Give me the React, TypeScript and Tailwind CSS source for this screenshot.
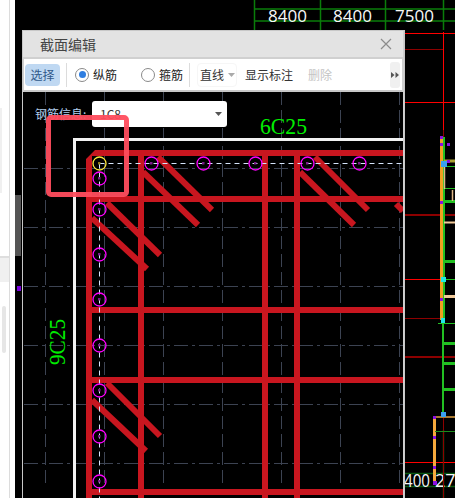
const sans = "font-['Noto_Sans_CJK_SC','Liberation_Sans',sans-serif]";

const gridX = [45, 104, 163, 222, 281, 340, 399];
const gridY = [168, 227, 286, 345, 404, 463];
const topRebars = [151, 203, 255, 307, 359];
const sideRebars = [178, 209, 254, 299, 345, 390, 436, 481];

const hBars = [
  [92, 196],
  [92, 307],
  [92, 377],
  [92, 489],
];
const vBars = [138, 262, 294];
const diagonals = [
  [158, 157, 212, 210],
  [143, 172, 198, 225],
  [107, 203, 160, 255],
  [92, 218, 147, 269],
  [315, 157, 368, 210],
  [300, 172, 354, 225],
  [107, 383, 160, 436],
  [92, 400, 146, 451],
  [396, 204, 403, 211],
];

const Rebar = ({ x, y, color = "#ff00ff" }: { x: number; y: number; color?: string }) => (
  <g>
    <circle cx={x + 0.5} cy={y + 0.5} r="6.5" fill="none" stroke={color} strokeWidth="1.3" />
    <rect x={x - 1} y={y - 1} width="2.5" height="2.5" fill={color === "#ff00ff" ? "#7a1a8a" : "#8a7a1a"} />
  </g>
);

const SectionDrawing = () => (
  <svg className="absolute inset-0 block" width="380" height="406" viewBox="23 92 380 406">
    {gridX.map((x) => (
      <line key={x} x1={x + 0.5} y1="92" x2={x + 0.5} y2="486" stroke="#3c4352" strokeWidth="1" strokeDasharray="13 5" />
    ))}
    {gridY.map((y) => (
      <line key={y} x1="24" y1={y + 0.5} x2="403" y2={y + 0.5} stroke="#3c4352" strokeWidth="1" strokeDasharray="14 4 3 4" />
    ))}

    <path d="M74.5 498V139.5H403" fill="none" stroke="#f2f2f2" strokeWidth="3" />

    <text
      x="260"
      y="134"
      fill="#00ee00"
      fontSize="24"
      fontFamily="'Liberation Serif', serif"
      textLength="47"
      lengthAdjust="spacingAndGlyphs"
    >
      6C25
    </text>
    <text
      transform="translate(65 365) rotate(-90)"
      fill="#00ee00"
      fontSize="24"
      fontFamily="'Liberation Serif', serif"
      textLength="46"
      lengthAdjust="spacingAndGlyphs"
    >
      9C25
    </text>

    <g fill="#c8161f">
      <path d="M403 150H95L86 159V498H92V156H403Z" />
      {hBars.map(([x, y]) => (
        <rect key={y} x={x} y={y} width={403 - x} height="6" />
      ))}
      {vBars.map((x) => (
        <rect key={x} x={x} y="150" width="6" height="348" />
      ))}
    </g>
    <g stroke="#c8161f" strokeWidth="6">
      {diagonals.map(([x1, y1, x2, y2]) => (
        <line key={`${x1}-${y1}`} x1={x1} y1={y1} x2={x2} y2={y2} />
      ))}
    </g>

    <path d="M99.5 163.5H403M99.5 163.5V498" stroke="#d5e4fb" strokeWidth="1" strokeDasharray="5 4" fill="none" />

    <Rebar x={99} y={163} color="#ffe83a" />
    {topRebars.map((x) => (
      <Rebar key={x} x={x} y={163} />
    ))}
    {sideRebars.map((y) => (
      <Rebar key={y} x={99} y={y} />
    ))}
  </svg>
);

// the model behind the dialog, drawn in page coordinates
const Background = () => (
  <svg className="absolute inset-0 block" width="440" height="498" viewBox="15 0 440 498">
    <rect x="15" y="195" width="6" height="61" fill="#555" />
    <rect x="17" y="286" width="4" height="5" fill="#7a00e0" />

    <g stroke="#0a7d0a" strokeWidth="1.5">
      <path d="M254.5 0V30M320.5 0V30M385.5 0V30M443.5 0V30M254 9H455M254 21H455" fill="none" />
      <path d="M443.5 430V498M405 473.5H455M405 486.5H455" stroke="#0b5a12" fill="none" />
    </g>
    <g fill="#f7f7f7" fontSize="17" fontFamily="'Open Sans', sans-serif">
      <text x="268" y="22">8400</text>
      <text x="333" y="22">8400</text>
      <text x="395" y="22">7500</text>
      <text x="404" y="487" fontSize="18" textLength="26" lengthAdjust="spacingAndGlyphs">400</text>
      <text x="435" y="487" fontSize="18">27</text>
    </g>

    <g fill="none">
      <path d="M405 33.5H455M405 102.5H455M405 279.5H455M405 462.5H455M443.5 32V130" stroke="#ff0000" />
      <path d="M405 49.5H443M405 318.5H443M443.5 130V138M443.5 416V498" stroke="#8d0000" />
      <path d="M405 215H455M405 357H455" stroke="#8d0000" strokeWidth="2" />
    </g>

    <g fill="none">
      <path d="M441.5 137V320" stroke="#f0a020" strokeWidth="3" />
      <path d="M444 137V320M443 320V416" stroke="#22c022" strokeWidth="2" />
      <path d="M444 161H455" stroke="#a8a030" strokeWidth="3" />
      <path d="M444 166.5H455M444 188.5H455M444 279.5H455M438 323.5H455M444 416.5H455" stroke="#22c022" />
      <path d="M444 201.5H455M444 261.5H455M444 343.5H455M444 363.5H455M444 389.5H455" stroke="#22c022" strokeWidth="3" />
      <path d="M444 222.5H455" stroke="#f0c898" strokeWidth="2" />
      <path d="M444 296.5H455" stroke="#f0c898" strokeWidth="3" />
      <path d="M444.5 162V189M452.5 190V201" stroke="#e0b888" strokeWidth="1.5" />
      <path d="M434.5 416V485" stroke="#f5a83c" strokeWidth="3" />
      <path d="M434 417H455" stroke="#a87830" strokeWidth="2" />
      <path d="M435 431.5H455" stroke="#1c8c1c" />
    </g>

    <g fill="#8a10e0">
      <rect x="447" y="143" width="3" height="3" />
      <rect x="440" y="136" width="3" height="3" />
      <rect x="440" y="143" width="3" height="3" />
      <rect x="447" y="160" width="3" height="3" />
      <rect x="440" y="201" width="3" height="3" />
      <rect x="440" y="298" width="3" height="3" />
      <rect x="433" y="416" width="3" height="3" />
      <rect x="433" y="436" width="3" height="3" />
      <rect x="433" y="466" width="3" height="3" />
      <rect x="433" y="481" width="4" height="4" />
    </g>
    <g fill="#3aa0f0">
      <rect x="441" y="161" width="6" height="6" />
      <rect x="441" y="412" width="5" height="5" />
    </g>
    <rect x="441" y="277" width="5" height="5" fill="#20e8e8" />
    <rect x="441" y="318" width="4" height="5" fill="#20e8e8" />
  </svg>
);

const Radio = ({ checked, label }: { checked?: boolean; label: string }) => (
  <div className="flex items-center gap-[4px]">
    <span className="flex size-[14px] items-center justify-center rounded-full border border-[#8a8a8a] bg-white">
      {checked && <span className="size-[7px] rounded-full bg-[#2f7ee0]" />}
    </span>
    <span className="text-[12px] leading-none text-[#222]">{label}</span>
  </div>
);

const Caret = ({ color = "#666" }: { color?: string }) => (
  <svg width="7" height="4" viewBox="0 0 7 4" className="shrink-0">
    <path d="M0 0H7L3.5 4Z" fill={color} />
  </svg>
);

const Toolbar = () => (
  <div className="mx-px mt-[2px] flex h-[33px] shrink-0 items-center border-b-2 border-[#c8c8c8] bg-white pl-[1px]">
    <button className="h-[22px] w-[35px] rounded-[4px] bg-[#bfd8f2] text-[12px] leading-none text-[#30598a]">选择</button>
    <span className="ml-[6px] h-[24px] w-px bg-[#dcdcdc]" />
    <div className="ml-[8px] w-[66px]">
      <Radio checked label="纵筋" />
    </div>
    <Radio label="箍筋" />
    <span className="ml-[6px] h-[24px] w-px bg-[#dcdcdc]" />
    <div className="ml-[7px] flex h-[24px] w-[40px] items-center gap-[4px] rounded-[4px] border border-[#f6f6f6] pl-[2px] text-[12px] leading-none text-[#333]">
      直线
      <Caret color="#aaa" />
    </div>
    <span className="ml-[8px] text-[12px] leading-none text-[#333]">显示标注</span>
    <span className="ml-[15px] text-[12px] leading-none text-[#c4c4c4]">删除</span>
    <div className="ml-auto mr-[2px] flex h-[26px] w-[10px] items-center justify-center rounded-[3px] bg-[#f0f0f0]">
      <svg width="8" height="6" viewBox="0 0 8 6">
        <path d="M0 0L3.5 3L0 6ZM4.5 0L8 3L4.5 6Z" fill="#555" />
      </svg>
    </div>
  </div>
);

const Dialog = () => (
  <div className={`absolute left-[22px] top-[30px] flex h-[468px] w-[383px] flex-col border-x border-t border-[#c8c8c8] bg-[#d0d0d0] pr-px ${sans}`}>
    <div className="flex h-[26px] shrink-0 items-center justify-between bg-[#e3e3e3] pl-[17px] pr-[11px]">
      <span className="text-[14px] leading-none text-[#444]">截面编辑</span>
      <svg width="12" height="12" viewBox="0 0 12 12">
        <path d="M1 1L11 11M11 1L1 11" stroke="#8c8c8c" strokeWidth="1.2" />
      </svg>
    </div>
    <Toolbar />
    <div className="relative flex-1 overflow-hidden bg-black">
      <SectionDrawing />
      <div className="relative flex items-center pl-[12px] pt-[9px]">
        <span className="w-[57px] text-[12px] leading-none text-[#b4d0f0]">钢筋信息:</span>
        <div className="flex h-[26px] w-[135px] items-center justify-between rounded-[3px] bg-white pl-[8px] pr-[5px] text-[12px] leading-none text-[#333]">
          1C8
          <Caret color="#555" />
        </div>
      </div>
    </div>
  </div>
);

export default function App() {
  return (
    <div className="relative flex h-[498px] w-[455px] overflow-hidden bg-black">
      {/* sidebar edge of the host page */}
      <div className="w-[15px] shrink-0 border-r-[5px] border-white bg-white">
        <div className="flex h-full flex-col border-r border-[#dcdcdc]">
          <div className="h-[258px] border-b-2 border-[#dedede] pt-[108px]">
            <div className="h-[85px] w-[2px] bg-[#f0f0f0]" />
          </div>
          <div className="h-[24px] bg-[#f0f0f0]" />
          <div className="ml-[2px] mt-[24px] h-[47px] w-[4px] rounded-full bg-[#e6e6e6]" />
        </div>
      </div>
      <div className="relative flex-1">
        <Background />
      </div>
      <Dialog />
      {/* highlight box */}
      <div className="absolute left-[46px] top-[115px] h-[82px] w-[83px] rounded-[5px] border-[5px] border-[#ff4d5e]/95" />
    </div>
  );
}
